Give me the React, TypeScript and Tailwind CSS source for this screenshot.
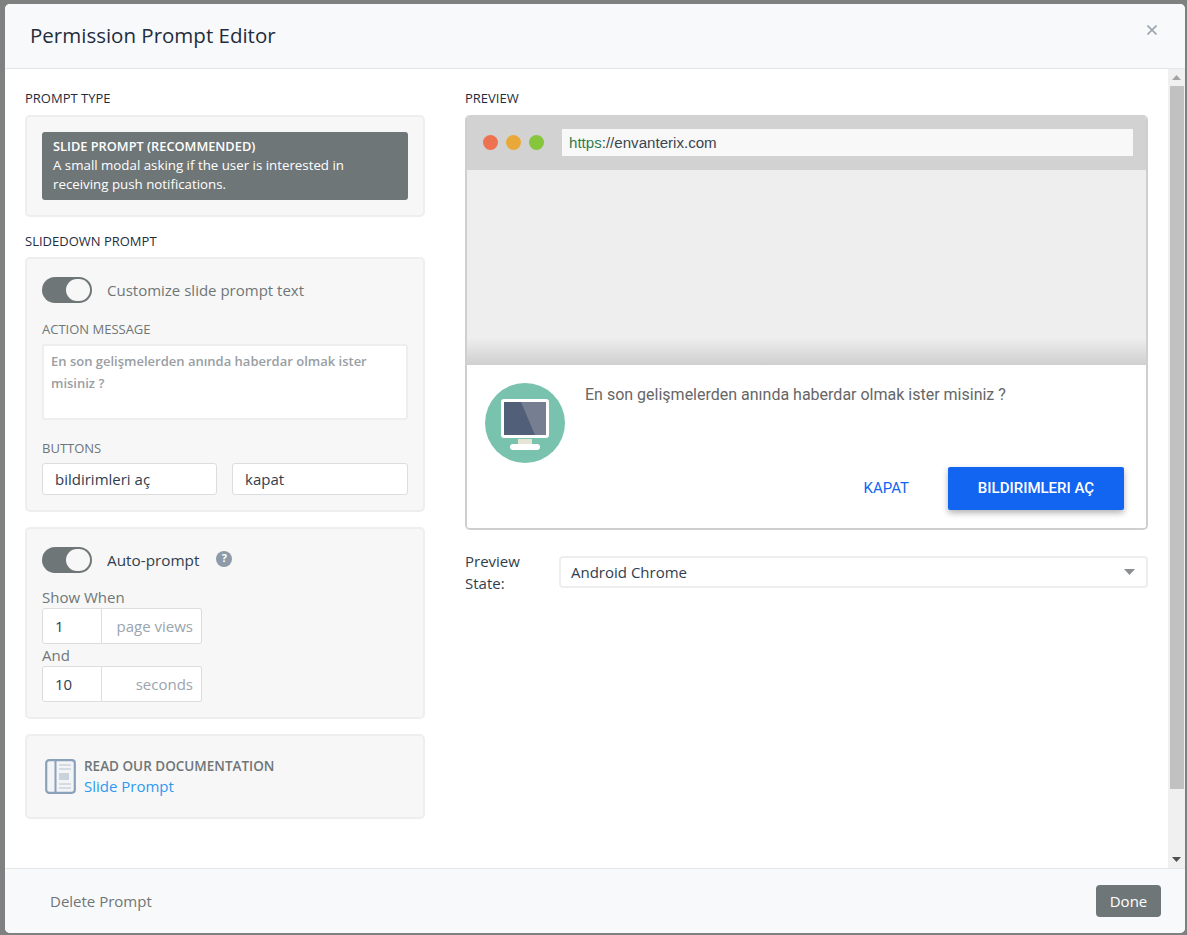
import React from "react";

const sans = "font-['Open_Sans',sans-serif]";

function Toggle() {
  return (
    <div className="w-[50px] h-[26px] rounded-full bg-[#6f7677] flex items-center justify-end pr-[2px] shrink-0">
      <div className="w-[24px] h-[22px] rounded-full bg-[#f7f7f7]" />
    </div>
  );
}

function Card({ className = "", children }: { className?: string; children: React.ReactNode }) {
  return <div className={"border-2 border-[#eeeeee] bg-[#f7f7f7] rounded-[5px] px-[15px] " + className}>{children}</div>;
}

function NumberRow({ value, unit }: { value: string; unit: string }) {
  return (
    <div className="flex h-[36px] w-[160px] text-[15px]">
      <div className="w-[60px] bg-white border border-[#dddddd] rounded-l-[3px] pl-[12px] pt-[1px] flex items-center text-[#2f3e4e]">{value}</div>
      <div className="w-[100px] bg-white border border-l-0 border-[#dddddd] rounded-r-[3px] pr-[8px] flex items-center justify-end text-[#9aa4ae]">{unit}</div>
    </div>
  );
}

export default function App() {
  return (
    <div className={"w-[1187px] h-[935px] bg-[#7e8180] pt-[4px] pl-[5px] pr-[2px] pb-[2px] overflow-hidden " + sans}>
      <div className="h-[929px] bg-white rounded-[5px] flex flex-col overflow-hidden">
        <header className="h-[65px] shrink-0 bg-[#f8f9fa] border-b border-[#e4e6e8] flex items-center justify-between pl-[25px] pr-[28px]">
          <h1 className="text-[20.5px] text-[#1f2d3d] font-normal mb-[2px]">Permission Prompt Editor</h1>
          <svg width="10" height="10" viewBox="0 0 10 10" className="mb-[12px]"><path d="M0.5 0.5L9.5 9.5M9.5 0.5L0.5 9.5" stroke="#9aa5b1" strokeWidth="1.6" /></svg>
        </header>

        <div className="flex-1 flex min-h-0">
          <div className="flex-1 flex pl-[20px] pr-[20px] pt-[21px]">
            <div className="w-[400px] shrink-0 mr-[40px]">
              <div className="text-[13px] leading-[16px] text-[#1f2d3d] mb-[9px]">PROMPT TYPE</div>
              <Card className="py-[15px]">
                <div className="bg-[#6f7677] rounded-[3px] h-[68px] px-[11px] pt-[5px] text-[13.3px] leading-[19px] text-white">
                  <div className="font-semibold text-[12.8px]">SLIDE PROMPT (RECOMMENDED)</div>
                  <div>A small modal asking if the user is interested in</div>
                  <div>receiving push notifications.</div>
                </div>
              </Card>
              <div className="text-[13px] leading-[18px] text-[#1f2d3d] mt-[15px] mb-[7px]">SLIDEDOWN PROMPT</div>
              <Card className="h-[255px] pt-[18px]">
                <div className="flex items-center gap-[15px]">
                  <Toggle />
                  <span className="text-[15px] text-[#6f7677]">Customize slide prompt text</span>
                </div>
                <div className="text-[13px] leading-[18px] text-[#6f7677] mt-[17px] mb-[6px]">ACTION MESSAGE</div>
                <div className="h-[76px] bg-white border-2 border-[#eeeeee] rounded-[3px] px-[7px] pt-[4px] text-[13px] leading-[22px] font-semibold text-[#999ea3]">
                  En son gelişmelerden anında haberdar olmak ister misiniz ?
                </div>
                <div className="text-[13px] leading-[18px] text-[#6f7677] mt-[19px] mb-[6px]">BUTTONS</div>
                <div className="flex justify-between">
                  <div className="w-[175px] h-[32px] bg-white border border-[#dddddd] rounded-[3px] pl-[12px] pt-[1px] flex items-center text-[15px] text-[#2f3e4e]">bildirimleri aç</div>
                  <div className="w-[176px] h-[32px] bg-white border border-[#dddddd] rounded-[3px] pl-[12px] pt-[1px] flex items-center text-[15px] text-[#2f3e4e]">kapat</div>
                </div>
              </Card>
              <Card className="h-[192px] pt-[18px] mt-[15px]">
                <div className="flex items-center gap-[15px]">
                  <Toggle />
                  <span className="text-[15.3px] text-[#2f3e4e]">Auto-prompt</span>
                  <span className="w-[16px] h-[16px] rounded-full bg-[#8d9aa8] text-white text-[11px] font-bold flex items-center justify-center mb-[3px] ml-[2px]">?</span>
                </div>
                <div className="text-[15px] leading-[20px] text-[#6f7677] mt-[14px] mb-[1px]">Show When</div>
                <NumberRow value="1" unit="page views" />
                <div className="text-[15px] leading-[22px] text-[#6f7677]">And</div>
                <NumberRow value="10" unit="seconds" />
              </Card>
              <Card className="h-[85px] mt-[15px] flex items-center gap-[8px] !pl-[18px]">
                <svg width="31" height="35" viewBox="0 0 31 35" className="shrink-0">
                  <rect x="1.2" y="1.2" width="28.6" height="32.6" rx="3" fill="#f2f4f6" stroke="#8ba1bb" strokeWidth="2.2" />
                  <line x1="10.5" y1="1.2" x2="10.5" y2="33.8" stroke="#8ba1bb" strokeWidth="2" />
                  <path d="M14 6H26M14 10H26M14 25H26M14 29H26" stroke="#c9d3dd" strokeWidth="1.6" />
                  <rect x="14" y="14" width="10" height="7" fill="#c9d3dd" />
                </svg>
                <div>
                  <div className="text-[13.5px] leading-[20px] font-semibold text-[#6f7677]">READ OUR DOCUMENTATION</div>
                  <div className="text-[15px] leading-[21px] text-[#2c9aef]">Slide Prompt</div>
                </div>
              </Card>
            </div>

            <div className="w-[683px] shrink-0">
              <div className="text-[13px] leading-[16px] text-[#1f2d3d] mb-[9px]">PREVIEW</div>
              <div className="h-[415px] rounded-[5px] border-2 border-t-0 border-[#cfcfcf] overflow-hidden flex flex-col">
                <div className="h-[55px] bg-[#d2d2d2] -mx-[2px] flex items-center pl-[18px] pr-[15px]">
                  <span className="w-[15px] h-[15px] rounded-full bg-[#ee7250]" />
                  <span className="w-[15px] h-[15px] rounded-full bg-[#e9a93a] ml-[8px]" />
                  <span className="w-[15px] h-[15px] rounded-full bg-[#85c63c] ml-[8px]" />
                  <div className="flex-1 h-[27px] bg-[#f8f8f8] ml-[18px] pl-[7px] pt-[1px] flex items-center text-[15.1px] text-[#3b4650] font-['Liberation_Sans',sans-serif]">
                    <span className="text-[#2e7d4f]">https</span>://envanterix.com
                  </div>
                </div>
                <div className="h-[195px] bg-[linear-gradient(to_bottom,#eeeeee_0%,#eeeeee_86%,#cfcfcf_100%)]" />
                <div className="flex-1 bg-white relative font-['Roboto',sans-serif]">
                  <div className="flex pl-[18px] pt-[18px]">
                    <svg width="80" height="80" viewBox="0 0 80 80" className="shrink-0">
                      <circle cx="40" cy="40" r="40" fill="#79c3ae" />
                      <rect x="33" y="56" width="14" height="9" fill="#e6e4d4" />
                      <rect x="25" y="61" width="30" height="6" rx="3" fill="#ffffff" />
                      <rect x="16" y="16" width="48" height="39" rx="3" fill="#ffffff" />
                      <rect x="19" y="19" width="42" height="33" fill="#515f78" />
                      <path d="M36 19H61V52H50Z" fill="#767f92" />
                    </svg>
                    <div className="text-[16px] leading-[22px] text-[#666666] ml-[20px] mt-[1px]">En son gelişmelerden anında haberdar olmak ister misiniz ?</div>
                  </div>
                  <div className="flex justify-end items-center pr-[22px] mt-[4px]">
                    <span className="text-[15px] font-normal text-[#1165f1] mr-[39px]">KAPAT</span>
                    <span className="w-[176px] h-[43px] rounded-[2px] bg-[#1165f1] text-white text-[15px] font-medium flex items-center justify-center shadow-[0_3px_6px_rgba(0,0,0,0.3)]">BILDIRIMLERI AÇ</span>
                  </div>
                </div>
              </div>
              <div className="flex mt-[20px]">
                <div className="w-[94px] text-[15px] leading-[22px] text-[#2f3e4e]">Preview<br />State:</div>
                <div className="w-[589px] h-[32px] mt-[6px] bg-white border-2 border-[#eeeeee] rounded-[4px] pl-[10px] pr-[11px] flex items-center justify-between text-[15px] text-[#2f3e4e]">
                  Android Chrome
                  <svg width="11" height="6" viewBox="0 0 11 6"><path d="M0 0H11L5.5 6Z" fill="#8a8f94" /></svg>
                </div>
              </div>
            </div>
          </div>

          <div className="w-[17px] shrink-0 bg-[#f0f0f0] flex flex-col items-center">
            <svg width="9" height="5" viewBox="0 0 9 5" className="mt-[6px]"><path d="M4.5 0L9 5H0Z" fill="#a3a3a3" /></svg>
            <div className="w-[14px] h-[703px] bg-[#c1c1c1] mt-[6px]" />
            <div className="flex-1" />
            <svg width="9" height="5" viewBox="0 0 9 5" className="mb-[6px]"><path d="M0 0H9L4.5 5Z" fill="#505050" /></svg>
          </div>
        </div>

        <footer className="h-[65px] shrink-0 bg-[#f8f9fa] border-t border-[#e4e6e8] flex items-center justify-between pl-[45px] pr-[24px]">
          <span className="text-[15px] text-[#6f7677]">Delete Prompt</span>
          <span className="w-[65px] h-[32px] rounded-[4px] bg-[#6f7677] text-white text-[15px] flex items-center justify-center">Done</span>
        </footer>
      </div>
    </div>
  );
}
